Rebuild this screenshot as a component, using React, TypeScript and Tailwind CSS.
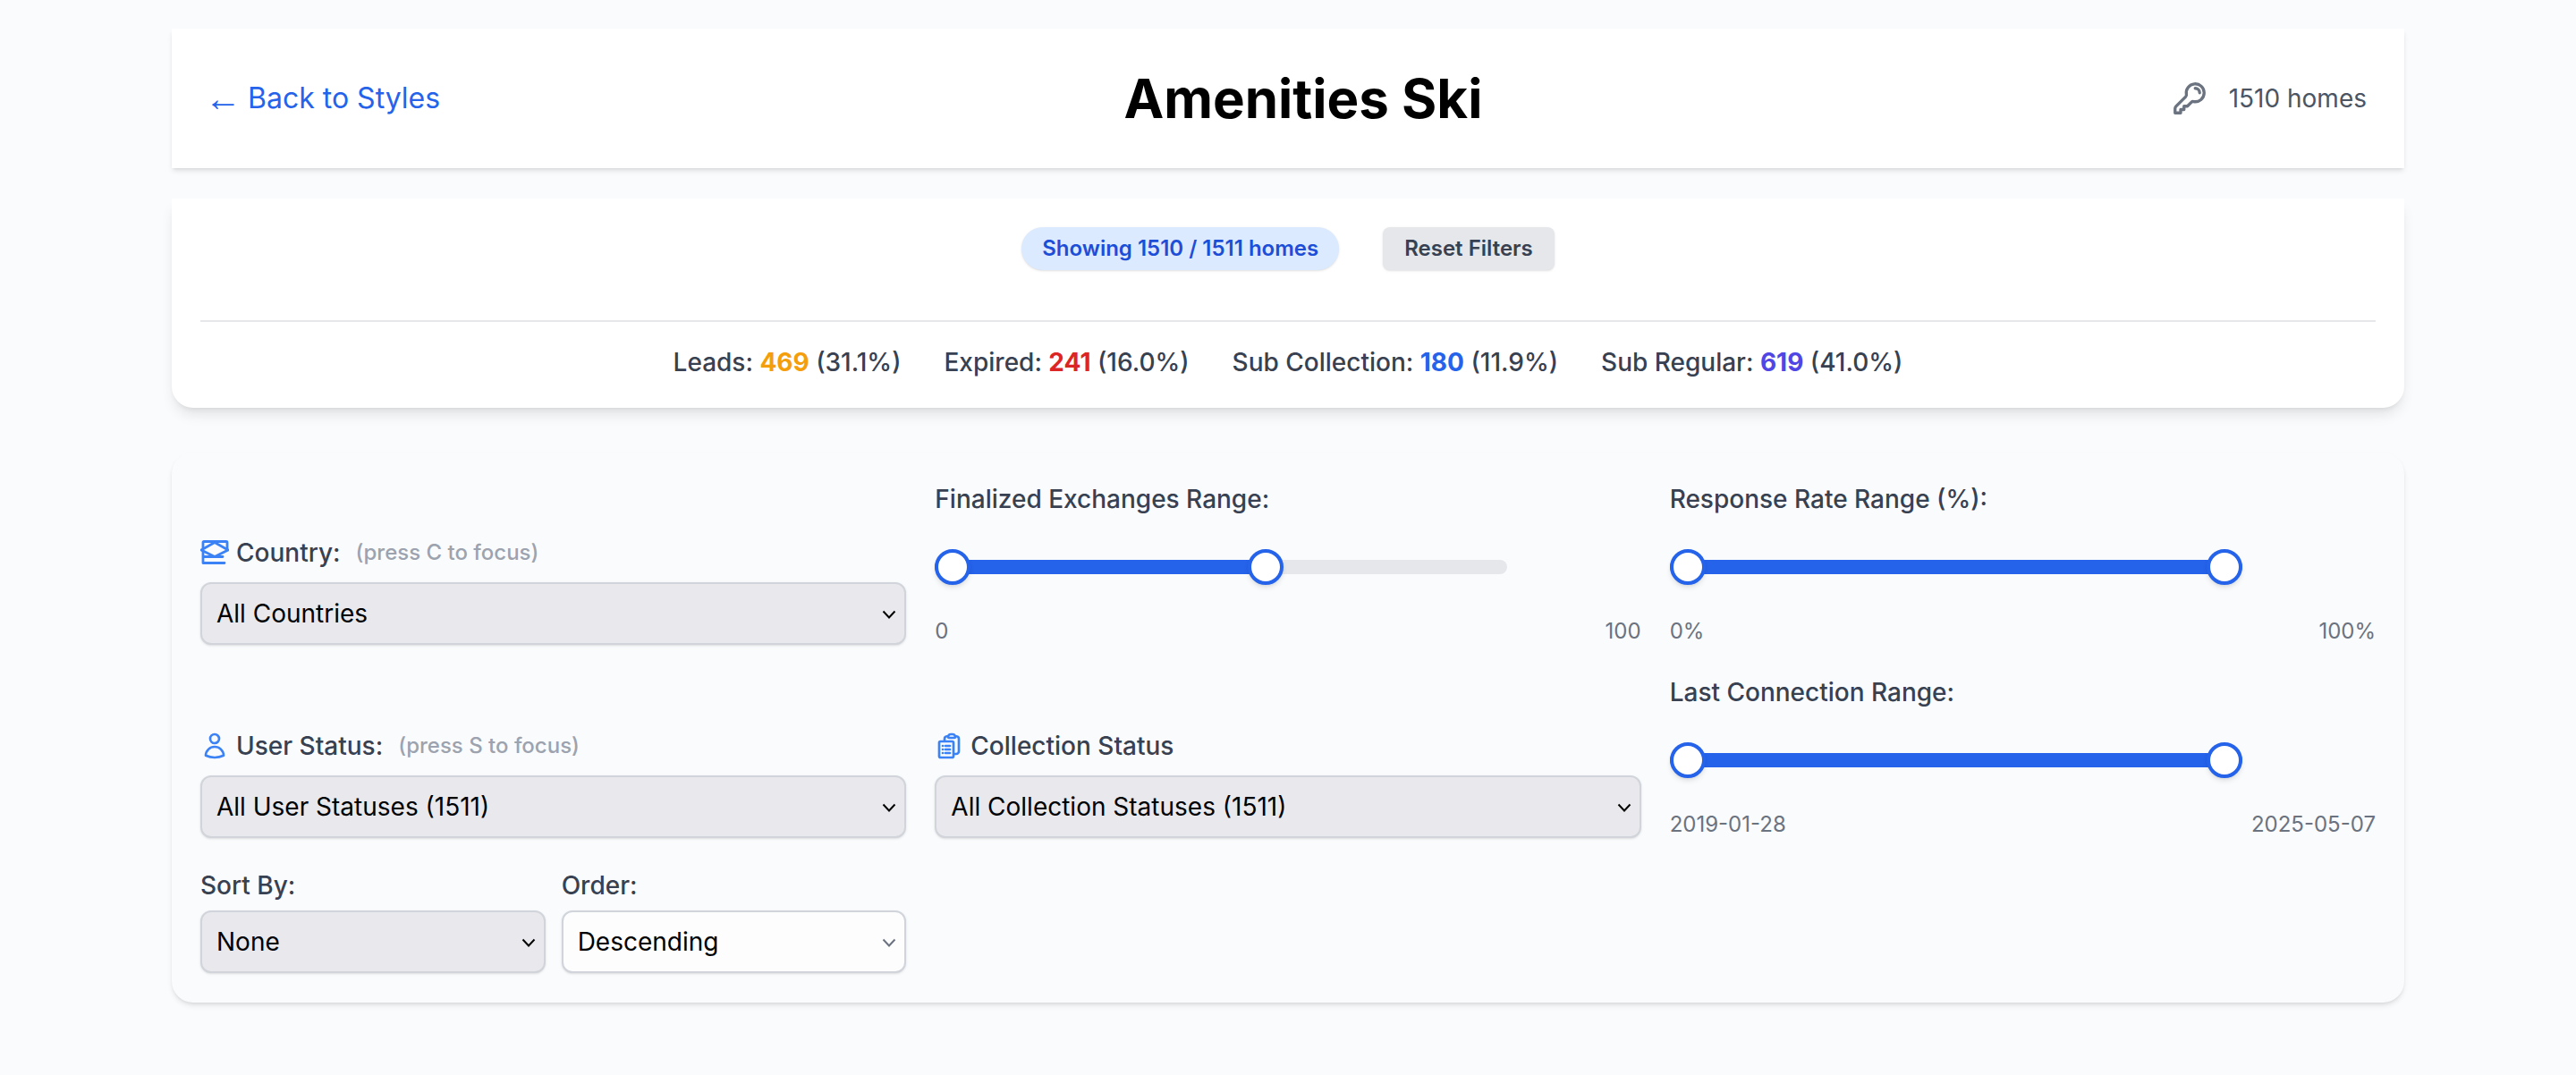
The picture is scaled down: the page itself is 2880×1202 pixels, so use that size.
import { HiOutlineKey, HiOutlineUser, HiOutlineClipboardDocumentList } from 'react-icons/hi2';

const CountryIcon = () => (
  <svg viewBox="0 0 32 28" className="w-[32px] h-[28px] shrink-0 text-[#3b82f6]" fill="none" stroke="currentColor" strokeWidth="2.8" strokeLinejoin="round" strokeLinecap="round">
    <path d="M3 9V2.5Q3 1.5 4 1.5H29Q30 1.5 30 2.5V10" />
    <path d="M1 11L16 2.5L31 11L16 18.5Z" />
    <path d="M3 12V25.5H27" />
    <path d="M4 18.5H25" />
  </svg>
);

const Stat = ({ label, value, pct, color }: { label: string; value: string; pct: string; color: string }) => (
  <span>
    {label}: <span className={`font-bold ${color}`}>{value}</span> ({pct})
  </span>
);

const Slider = ({ title, left, right, end = 100 }: { title: string; left: string; right: string; end?: number }) => (
  <div>
    <div className="text-[28px] leading-[40px] font-medium text-[#374151]">{title}</div>
    <div className="h-[112px] flex items-center">
      <div className="relative w-[640px] h-[16px] rounded-full bg-[#e5e7eb]">
        <div className="h-full bg-[#2563eb] rounded-full" style={{ width: `${end}%` }} />
        <div className="absolute top-[-12px] left-0 w-[40px] h-[40px] rounded-full bg-white border-[4px] border-[#2563eb] shadow-md" />
        <div
          className="absolute top-[-12px] w-[40px] h-[40px] rounded-full bg-white border-[4px] border-[#2563eb] shadow-md"
          style={{ left: `calc(${end}% - ${end === 100 ? 40 : 20}px)` }}
        />
      </div>
    </div>
    <div className="flex justify-between text-[24px] leading-[32px] text-[#6b7280]">
      <span>{left}</span>
      <span>{right}</span>
    </div>
  </div>
);

const Select = ({ options, white }: { options: string; white?: boolean }) => (
  <div className="relative">
    <select
      className={`block w-full h-[70px] appearance-none pl-[16px] pr-[40px] text-[28px] text-black border-[2px] border-[#d1d5db] rounded-[12px] shadow-sm ${white ? 'bg-[#fdfdfe]' : 'bg-[#e9e9ed]'}`}
      defaultValue={options}
    >
      <option>{options}</option>
    </select>
    <svg
      viewBox="0 0 16 10"
      className={`absolute right-[11px] top-[31px] w-[16px] h-[10px] pointer-events-none ${white ? 'text-[#6b7280]' : 'text-black'}`}
      fill="none"
      stroke="currentColor"
      strokeWidth="2"
    >
      <path d="M1.5 1.5L8 8.5L14.5 1.5" />
    </svg>
  </div>
);

const IconLabel = ({ icon, title, hint }: { icon: React.ReactNode; title: string; hint?: string }) => (
  <div className="flex items-center gap-[8px] mb-[13px] text-[28px] leading-[40px] font-medium text-[#374151]">
    {icon}
    <span>{title}</span>
    {hint && <span className="ml-[9px] text-[24px] text-[#9ca3af]">{hint}</span>}
  </div>
);

const App = () => {
  return (
    <div className="h-screen overflow-hidden bg-[#fafbfc] font-['Inter',sans-serif]">
      <div className="h-0 shadow-md" />
      <div className="w-[2496px] mx-auto pt-[32px]">
        {/* Header */}
        <header className="h-[156px] bg-white shadow-md flex items-center justify-between px-[42px]">
          <a className="ml-[-5px] text-[32px] leading-[48px] text-[#2563eb]">
            <span className="relative top-[3px] mr-[-2px] text-[41px] leading-none font-['Liberation_Sans',sans-serif]">←</span> Back to Styles
          </a>
          <h1 className="text-[60px] font-bold text-black mr-[6px]">Amenities Ski</h1>
          <div className="flex items-center gap-[24px] text-[28px] text-[#4b5563]">
            <HiOutlineKey className="w-[40px] h-[40px] text-[#6b7280]" strokeWidth={2} />
            <span>1510 homes</span>
          </div>
        </header>

        {/* Summary */}
        <section className="mt-[34px] h-[234px] bg-white rounded-b-[24px] shadow-lg px-[32px] pt-[32px]">
          <div className="flex items-center justify-center gap-[49px] text-[24px] leading-[32px]">
            <div className="h-[48px] px-[23px] flex items-center rounded-full bg-[#dbeafe] text-[#1d4ed8] font-semibold shadow-sm">
              Showing 1510 / 1511 homes
            </div>
            <button className="h-[48px] px-[24px] rounded-[8px] bg-[#e5e7eb] text-[#374151] font-semibold shadow-sm">
              Reset Filters
            </button>
          </div>
          <div className="mt-[56px] border-t-[2px] border-[#e5e7eb] pt-[23px] flex justify-center gap-[48px] text-[28px] leading-[44px] font-medium text-[#374151]">
            <Stat label="Leads" value="469" pct="31.1%" color="text-[#f59e0b]" />
            <Stat label="Expired" value="241" pct="16.0%" color="text-[#dc2626]" />
            <Stat label="Sub Collection" value="180" pct="11.9%" color="text-[#2563eb]" />
            <Stat label="Sub Regular" value="619" pct="41.0%" color="text-[#4f46e5]" />
          </div>
        </section>

        {/* Filters */}
        <section className="mt-[50px] h-[615px] bg-[#fafbfc] rounded-[24px] shadow-md p-[32px] grid grid-cols-3 gap-x-[32px] gap-y-[33px] grid-rows-[183px_183px_118px]">
          <div className="flex flex-col justify-end">
            <IconLabel icon={<CountryIcon />} title="Country:" hint="(press C to focus)" />
            <Select options="All Countries" />
          </div>
          <Slider title="Finalized Exchanges Range:" left="0" right="100" end={57.75} />
          <Slider title="Response Rate Range (%):" left="0%" right="100%" />

          <div className="flex flex-col justify-end">
            <IconLabel icon={<HiOutlineUser className="w-[32px] h-[32px] text-[#3b82f6]" strokeWidth={2} />} title="User Status:" hint="(press S to focus)" />
            <Select options="All User Statuses (1511)" />
          </div>
          <div className="flex flex-col justify-end">
            <IconLabel icon={<HiOutlineClipboardDocumentList className="w-[32px] h-[32px] text-[#3b82f6]" strokeWidth={2} />} title="Collection Status" />
            <Select options="All Collection Statuses (1511)" />
          </div>
          <Slider title="Last Connection Range:" left="2019-01-28" right="2025-05-07" />

          <div className="grid grid-cols-2 gap-x-[18px]">
            <div>
              <div className="mb-[8px] text-[28px] leading-[40px] font-medium text-[#374151]">Sort By:</div>
              <Select options="None" />
            </div>
            <div>
              <div className="mb-[8px] text-[28px] leading-[40px] font-medium text-[#374151]">Order:</div>
              <Select options="Descending" white />
            </div>
          </div>
        </section>
      </div>
    </div>
  );
};

export default App;
